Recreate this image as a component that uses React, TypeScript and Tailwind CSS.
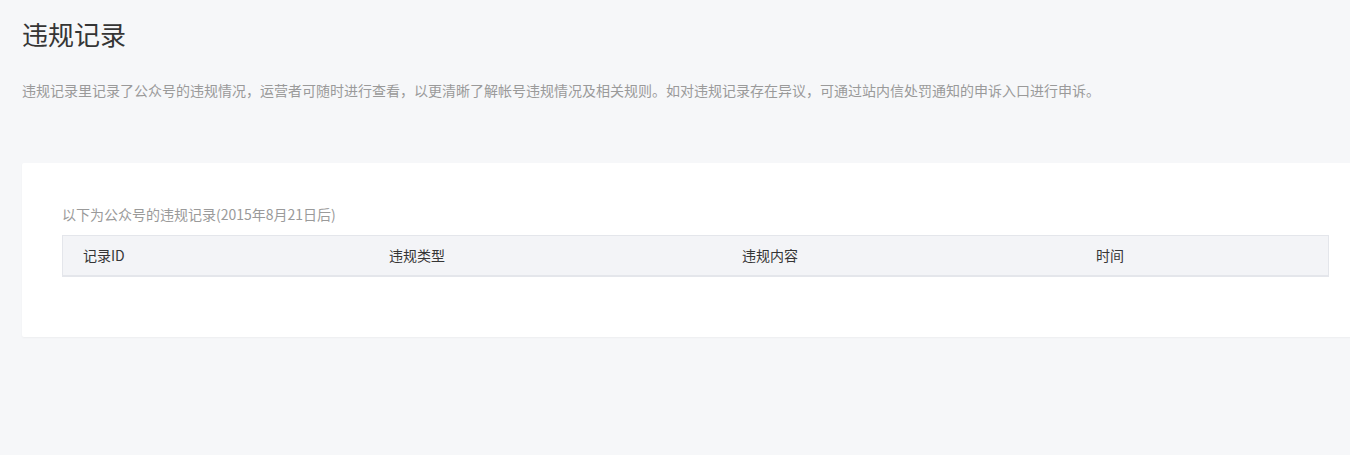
import React from "react";

const cols = [
  { label: "记录ID", w: "w-[306px]" },
  { label: "违规类型", w: "w-[353px]" },
  { label: "违规内容", w: "w-[354px]" },
  { label: "时间", w: "flex-1" },
];

export default function App() {
  return (
    <div
      className="min-h-[455px] w-full overflow-hidden bg-[#f6f7f9] pl-[22px] pt-[17px]"
      style={{ fontFamily: '"Noto Sans CJK SC", "Noto Sans", sans-serif' }}
    >
      <h2 className="text-[26px] leading-[34px] font-normal text-[#353535]">违规记录</h2>
      <p className="mt-[29px] text-[14px] leading-[20px] text-[#9a9a9a]">
        违规记录里记录了公众号的违规情况，运营者可随时进行查看，以更清晰了解帐号违规情况及相关规则。如对违规记录存在异议，可通过站内信处罚通知的申诉入口进行申诉。
      </p>
      <div className="mt-[63px] w-[1347px] rounded-[2px] bg-white px-[40px] pt-[41px] pb-[60px] shadow-[0_1px_2px_rgba(0,0,0,0.04)]">
        <div className="text-[14px] leading-[20px] text-[#9a9a9a]">
          以下为公众号的违规记录(2015年8月21日后)
        </div>
        <div className="mt-[11px] flex h-[42px] items-center border border-b-2 border-[#e4e6eb] bg-[#f3f4f7] pl-[20px]">
          {cols.map((c) => (
            <div key={c.label} className={`${c.w} text-[14px] text-[#353535]`}>
              {c.label}
            </div>
          ))}
        </div>
      </div>
    </div>
  );
}
